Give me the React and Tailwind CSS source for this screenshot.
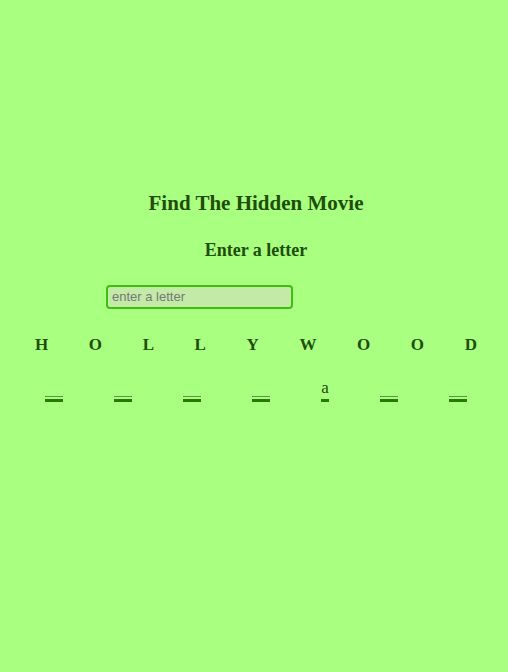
const word = ['H', 'O', 'L', 'L', 'Y', 'W', 'O', 'O', 'D'];
const slots = ['', '', '', '', 'a', '', ''];

const Slot = ({ letter }) => {
  if (letter) {
    return (
      <div className="flex flex-col items-center">
        <span className="text-[17px] leading-[18px] text-[#1f4d0a]">{letter}</span>
        <div className="mt-[2px] h-[3px] w-[8px] bg-[#267a00]" />
      </div>
    );
  }
  return (
    <div className="flex flex-col items-center">
      <div className="h-px w-[18px] bg-[#5f8f4a]" />
      <div className="mt-[2px] h-[3px] w-[18px] bg-[#267a00]" />
    </div>
  );
};

export default function App() {
  return (
    <div className="min-h-[672px] w-full bg-[#a8ff80] font-['Liberation_Serif',serif] text-[#1f4d0a]">
      <div className="flex flex-col pt-[190px]">
        <h1 className="pl-[4px] text-center text-[21px] font-bold leading-[26px]">Find The Hidden Movie</h1>
        <h2 className="mt-[23px] pl-[4px] text-center text-[18px] font-bold leading-[22px]">Enter a letter</h2>
        <div className="mt-[23px] pl-[106px]">
          <input
            className="h-[24px] w-[187px] rounded-[4px] border-2 border-[#3cbf10] bg-[#c4eaa8] px-[4px] font-['Liberation_Sans',sans-serif] text-[13px] text-[#333] placeholder:text-[#777] outline-none"
            placeholder="enter a letter"
          />
        </div>
        <div className="mt-[26px] flex justify-between pl-[35px] pr-[31px] text-[17px] font-bold leading-[20px]">
          {word.map((c, i) => (
            <span key={i}>{c}</span>
          ))}
        </div>
        <div className="mt-[24px] flex items-end justify-between pl-[45px] pr-[41px]">
          {slots.map((s, i) => (
            <Slot key={i} letter={s} />
          ))}
        </div>
      </div>
    </div>
  );
}
